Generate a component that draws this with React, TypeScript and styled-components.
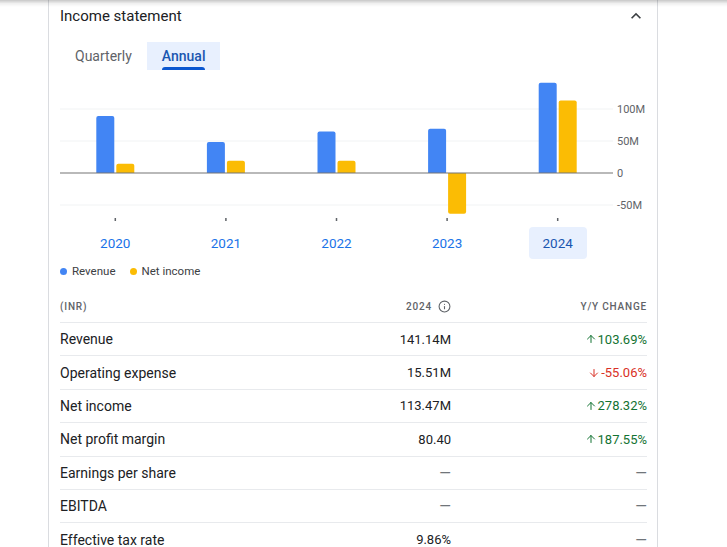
import React from "react";
import styled, { createGlobalStyle } from "styled-components";
import { ArrowUp, ArrowDown, Info } from "lucide-react";

const GlobalStyle = createGlobalStyle`
  html, body {
    margin: 0;
    padding: 0;
    background: #fff;
    overflow: hidden;
    font-family: Roboto, "Noto Sans", Arial, sans-serif;
    color: #202124;
  }
`;

const TopShadow = styled.div`
  position: fixed;
  top: 0;
  left: 0;
  right: 0;
  height: 7px;
  background: linear-gradient(to bottom, rgba(0, 0, 0, 0.22), rgba(0, 0, 0, 0.06) 50%, rgba(0, 0, 0, 0));
  pointer-events: none;
`;

const Card = styled.section`
  box-sizing: border-box;
  margin-left: 48px;
  width: 610px;
  min-height: 100vh;
  border-left: 1px solid #dadce0;
  border-right: 1px solid #dadce0;
  padding: 0 10px 0 11px;
`;

const Header = styled.div`
  height: 32px;
  display: flex;
  align-items: center;
  justify-content: space-between;
`;

const Title = styled.h2`
  margin: 0;
  font-size: 15px;
  font-weight: 400;
  color: #202124;
`;

const Chevron = styled.svg`
  width: 20px;
  height: 20px;
  margin-right: 1px;
  fill: #3c4043;
`;

const Tabs = styled.div`
  display: flex;
  margin-top: 10px;
  height: 28px;
`;

const Tab = styled.div<{ $active?: boolean }>`
  position: relative;
  padding: 0 15px;
  display: flex;
  align-items: center;
  font-size: 14px;
  font-weight: ${(p) => (p.$active ? 500 : 400)};
  color: ${(p) => (p.$active ? "#1a56b0" : "#5f6368")};
  background: ${(p) => (p.$active ? "#e8f0fe" : "transparent")};
`;

const TabLine = styled.span`
  position: absolute;
  left: 15px;
  right: 15px;
  bottom: 0;
  height: 3px;
  border-radius: 3px 3px 0 0;
  background: #0b57d0;
`;

const ChartSvg = styled.svg`
  display: block;
  margin-top: 8px;
  width: 586px;
  height: 146px;
  font-family: Roboto, Arial, sans-serif;
`;

const Years = styled.div`
  display: flex;
  width: 553px;
  margin-top: 3px;
`;

const YearCell = styled.div`
  flex: 1;
  display: flex;
  justify-content: center;
`;

const YearButton = styled.div<{ $active?: boolean }>`
  width: 58px;
  height: 32px;
  border-radius: 4px;
  display: flex;
  align-items: center;
  justify-content: center;
  font-size: 13.5px;
  color: ${(p) => (p.$active ? "#1a56b0" : "#1a73e8")};
  background: ${(p) => (p.$active ? "#e8f0fe" : "transparent")};
`;

const Legend = styled.div`
  display: flex;
  align-items: center;
  gap: 14px;
  margin-top: 5px;
  height: 14px;
  font-size: 11.5px;
  color: #3c4043;
`;

const LegendItem = styled.span`
  display: flex;
  align-items: center;
  gap: 5px;
`;

const Dot = styled.span<{ $color: string }>`
  width: 7px;
  height: 7px;
  border-radius: 50%;
  background: ${(p) => p.$color};
`;

const Table = styled.div`
  margin-top: 12px;
`;

const Row = styled.div<{ $head?: boolean }>`
  display: grid;
  grid-template-columns: 1fr 120px 196px;
  align-items: center;
  height: ${(p) => (p.$head ? "33px" : "33.4px")};
  box-sizing: border-box;
  border-bottom: 1px solid #e8eaed;
  font-size: 13px;
`;

const HeadCell = styled.div<{ $right?: boolean }>`
  font-size: 10px;
  font-weight: 500;
  letter-spacing: 0.8px;
  color: #5f6368;
  display: flex;
  align-items: center;
  gap: 6px;
  justify-content: ${(p) => (p.$right ? "flex-end" : "flex-start")};
`;

const Label = styled.div`
  font-size: 14px;
  color: #202124;
`;

const Value = styled.div`
  text-align: right;
  color: #202124;
`;

const Change = styled.div<{ $tone: "up" | "down" | "none" }>`
  display: flex;
  align-items: center;
  justify-content: flex-end;
  gap: 1px;
  font-size: 13px;
  color: ${(p) =>
    p.$tone === "up" ? "#137333" : p.$tone === "down" ? "#d93025" : "#5f6368"};
`;

const Dash = styled.span`
  font-size: 15px;
  color: #70757a;
`;

// chart data, values in millions
const years = [
  { year: "2020", revenue: 89, net: 14.5 },
  { year: "2021", revenue: 48.5, net: 19 },
  { year: "2022", revenue: 65, net: 19 },
  { year: "2023", revenue: 69, net: -63.6 },
  { year: "2024", revenue: 141.14, net: 113.47 },
];

const rows: { label: string; value: string; change: string; tone: "up" | "down" | "none" }[] = [
  { label: "Revenue", value: "141.14M", change: "103.69%", tone: "up" },
  { label: "Operating expense", value: "15.51M", change: "-55.06%", tone: "down" },
  { label: "Net income", value: "113.47M", change: "278.32%", tone: "up" },
  { label: "Net profit margin", value: "80.40", change: "187.55%", tone: "up" },
  { label: "Earnings per share", value: "", change: "", tone: "none" },
  { label: "EBITDA", value: "", change: "", tone: "none" },
  { label: "Effective tax rate", value: "9.86%", change: "", tone: "none" },
];

const ZERO = 95;
const SCALE = 0.64;
const COL = 110.6;

function barPath(x: number, w: number, v: number) {
  const h = Math.abs(v) * SCALE;
  const r = 2;
  if (v >= 0) {
    const top = ZERO - h;
    return `M${x} ${ZERO} V${top + r} Q${x} ${top} ${x + r} ${top} H${x + w - r} Q${x + w} ${top} ${x + w} ${top + r} V${ZERO} Z`;
  }
  const bot = ZERO + h;
  return `M${x} ${ZERO} V${bot - r} Q${x} ${bot} ${x + r} ${bot} H${x + w - r} Q${x + w} ${bot} ${x + w} ${bot - r} V${ZERO} Z`;
}

const Chart: React.FC = () => (
  <ChartSvg viewBox="0 0 586 146">
    {[31, 63, 127].map((y) => (
      <line key={y} x1={0} x2={553} y1={y} y2={y} stroke="#f1f3f4" strokeWidth={1} />
    ))}
    {years.map((d, i) => {
      const cx = COL / 2 + i * COL;
      return (
        <g key={d.year}>
          <path d={barPath(cx - 19, 18, d.revenue)} fill="#4285f4" />
          <path d={barPath(cx + 1, 18, d.net)} fill="#fbbc04" />
          <rect x={cx - 0.75} y={140} width={1.5} height={3} fill="#5f6368" />
        </g>
      );
    })}
    <line x1={0} x2={553} y1={ZERO} y2={ZERO} stroke="#757575" strokeWidth={1.2} />
    {[
      ["100M", 31],
      ["50M", 63],
      ["0", 95],
      ["-50M", 127],
    ].map(([t, y]) => (
      <text key={t} x={557} y={Number(y) + 4} fontSize={11} fill="#5f6368">
        {t}
      </text>
    ))}
  </ChartSvg>
);

const App: React.FC = () => (
  <>
    <GlobalStyle />
    <Card>
      <Header>
        <Title>Income statement</Title>
        <Chevron viewBox="0 0 24 24">
          <path d="M7.41 15.41L12 10.83l4.59 4.58L18 14l-6-6-6 6z" />
        </Chevron>
      </Header>
      <Tabs>
        <Tab>Quarterly</Tab>
        <Tab $active>
          Annual
          <TabLine />
        </Tab>
      </Tabs>
      <Chart />
      <Years>
        {years.map((d) => (
          <YearCell key={d.year}>
            <YearButton $active={d.year === "2024"}>{d.year}</YearButton>
          </YearCell>
        ))}
      </Years>
      <Legend>
        <LegendItem>
          <Dot $color="#4285f4" />
          Revenue
        </LegendItem>
        <LegendItem>
          <Dot $color="#fbbc04" />
          Net income
        </LegendItem>
      </Legend>
      <Table>
        <Row $head>
          <HeadCell>(INR)</HeadCell>
          <HeadCell $right>
            2024
            <Info size={13} strokeWidth={2} />
          </HeadCell>
          <HeadCell $right>Y/Y CHANGE</HeadCell>
        </Row>
        {rows.map((r) => (
          <Row key={r.label}>
            <Label>{r.label}</Label>
            <Value>{r.value || <Dash>—</Dash>}</Value>
            <Change $tone={r.tone}>
              {r.tone === "up" && <ArrowUp size={12} strokeWidth={2} />}
              {r.tone === "down" && <ArrowDown size={12} strokeWidth={2} />}
              {r.change || <Dash>—</Dash>}
            </Change>
          </Row>
        ))}
      </Table>
    </Card>
    <TopShadow />
  </>
);

export default App;
